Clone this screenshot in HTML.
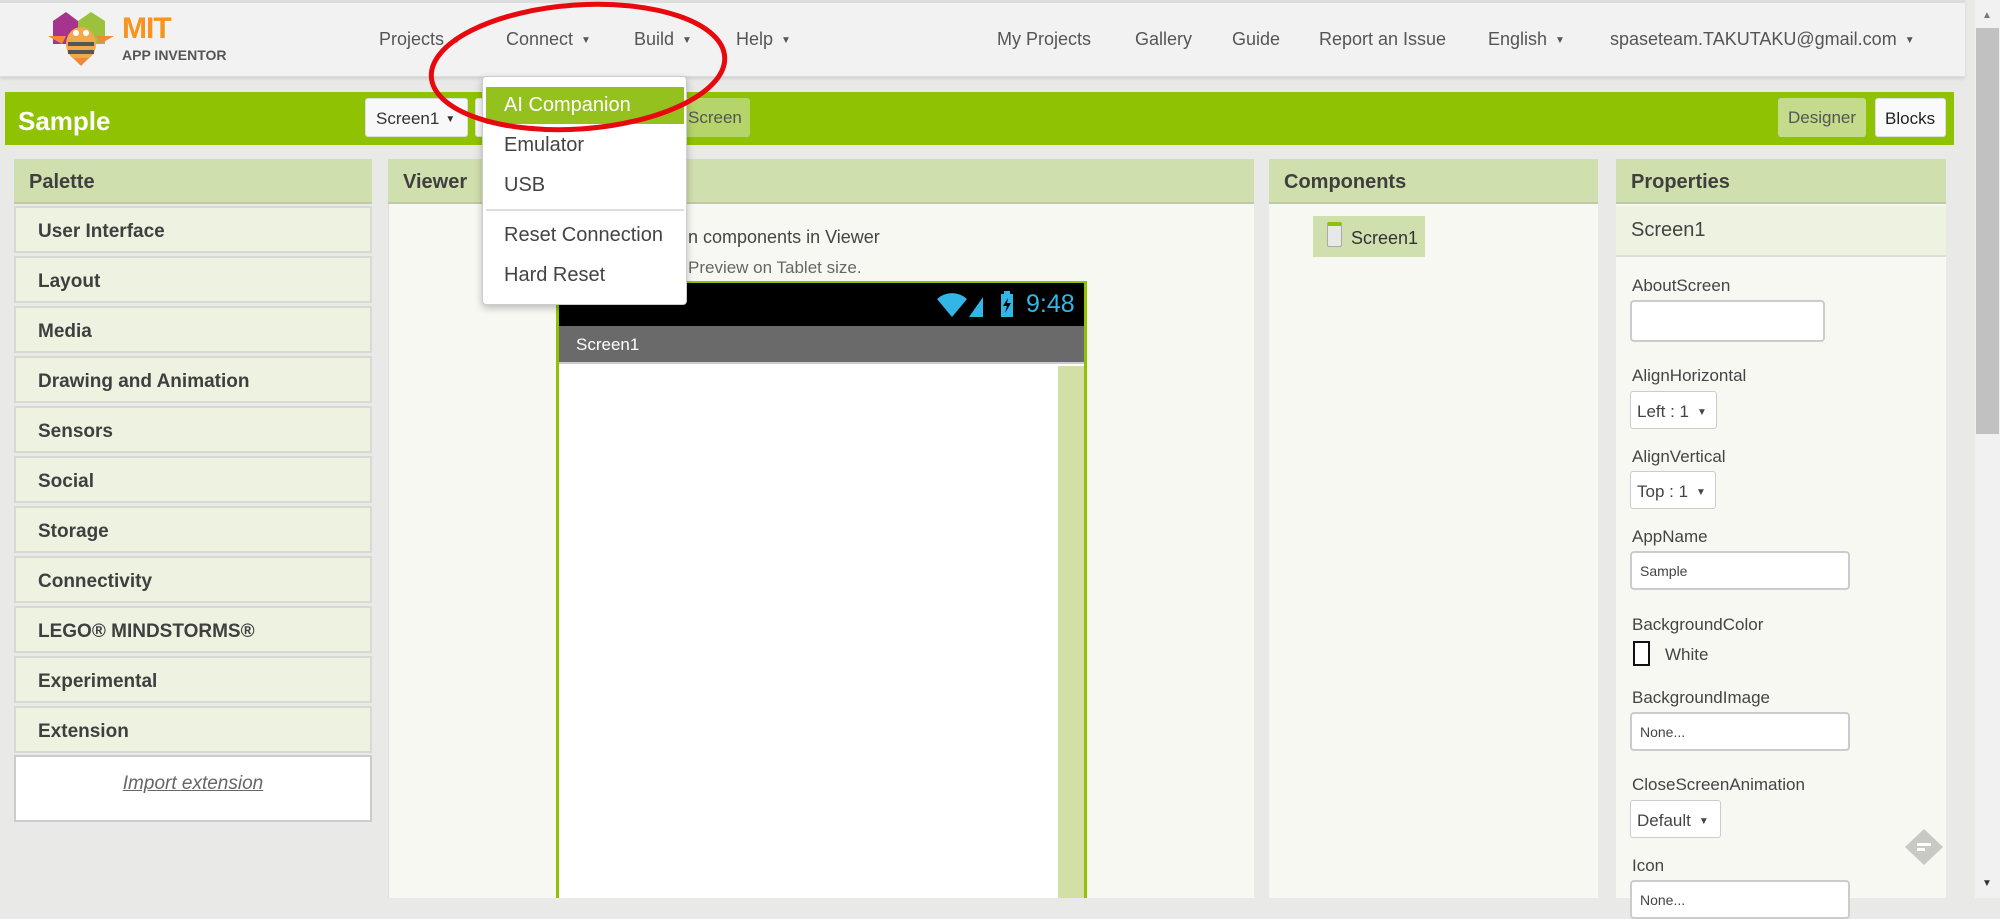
<!DOCTYPE html>
<html><head><meta charset="utf-8"><style>
*{margin:0;padding:0;box-sizing:border-box}
body{width:2000px;height:898px;overflow:hidden;background:#e9e9e7;font-family:"Liberation Sans",sans-serif;position:relative;color:#444}
.a{position:absolute}
.nav{font-size:18px;color:#555;top:29px;white-space:nowrap}
.car{font-size:10px;margin-left:8px;vertical-align:2px}
.hdr{background:#d0dfae;border-bottom:2px solid #bfc9a8;height:45px;font-weight:bold;font-size:20px;color:#3f3f3f;padding:12px 0 0 15px}
.item{left:14px;width:358px;height:47px;background:#eef2e1;border:2px solid #d9d9d4;font-weight:bold;font-size:19px;color:#3f3f3f;padding:13px 0 0 22px}
.lbl{left:1632px;font-size:17px;color:#444}
.inp{left:1630px;background:#fff;border:2px solid #ccc;border-radius:4px;font-size:14px;color:#444;padding:10px 0 0 8px}
.sel{left:1630px;background:#fff;border:1px solid #ccc;border-radius:3px;font-size:17px;color:#444;padding:10px 0 0 6px;height:38px}
.mi{left:504px;font-size:20px;color:#444}
</style></head><body>
<div class="a" style="left:0;top:0;width:1965px;height:77px;background:#f2f2f2;border-top:3px solid #ddd;border-bottom:1px solid #ddd;box-shadow:0 2px 3px rgba(0,0,0,.1)"></div>
<svg class="a" style="left:48px;top:6px" width="80" height="60" viewBox="0 0 80 60">
<polygon points="5,15 18,6 30,15 30,38 5,38" fill="#a5348f"/>
<polygon points="30,15 43,6 57,15 57,38 30,38" fill="#9bc23c"/>
<ellipse cx="33" cy="38" rx="15" ry="17" fill="#f0a94b"/>
<rect x="20" y="36" width="26" height="4" fill="#555"/><rect x="20" y="44" width="26" height="4" fill="#555"/>
<polygon points="0,30 18,30 14,38" fill="#f08a38"/><polygon points="66,30 48,30 52,38" fill="#f08a38"/>
<polygon points="25,52 41,52 33,60" fill="#f08a38"/>
<circle cx="28" cy="27" r="3" fill="#fff"/><circle cx="38" cy="27" r="3" fill="#fff"/>
</svg>
<div class="a" style="left:122px;top:12px;font-size:30px;font-weight:bold;color:#f7931e;letter-spacing:-1px">MIT</div>
<div class="a" style="left:122px;top:47px;font-size:14px;font-weight:bold;color:#555">APP INVENTOR</div>
<div class="a nav" style="left:379px">Projects<span class="car">▼</span></div>
<div class="a nav" style="left:506px">Connect<span class="car">▼</span></div>
<div class="a nav" style="left:634px">Build<span class="car">▼</span></div>
<div class="a nav" style="left:736px">Help<span class="car">▼</span></div>
<div class="a nav" style="left:997px">My Projects</div>
<div class="a nav" style="left:1135px">Gallery</div>
<div class="a nav" style="left:1232px">Guide</div>
<div class="a nav" style="left:1319px">Report an Issue</div>
<div class="a nav" style="left:1488px">English<span class="car">▼</span></div>
<div class="a nav" style="left:1610px">spaseteam.TAKUTAKU@gmail.com<span class="car">▼</span></div>
<div class="a" style="left:1975px;top:0;width:25px;height:898px;background:#f1f1f1"></div>
<div class="a" style="left:1976px;top:28px;width:23px;height:406px;background:#c1c1c1"></div>
<div class="a" style="left:1982px;top:10px;font-size:10px;color:#777">▲</div>
<div class="a" style="left:1982px;top:878px;font-size:10px;color:#333">▼</div>
<div class="a" style="left:5px;top:92px;width:1949px;height:53px;background:#8fc202"></div>
<div class="a" style="left:18px;top:106px;font-size:26px;font-weight:bold;color:#fff">Sample</div>
<div class="a" style="left:365px;top:98px;width:103px;height:39px;background:#f8f8f8;border:1px solid #ddd;border-radius:3px;font-size:17px;color:#333;padding:10px 0 0 10px">Screen1<span class="car" style="margin-left:6px">▼</span></div>
<div class="a" style="left:475px;top:98px;width:130px;height:39px;background:#f8f8f8;border:1px solid #ddd;border-radius:3px"></div>
<div class="a" style="left:612px;top:98px;width:138px;height:39px;background:#b5d46a;border-radius:3px;font-size:17px;color:#555;padding:10px 0 0 76px">Screen</div>
<div class="a" style="left:1778px;top:98px;width:88px;height:39px;background:#c3db8a;border-radius:3px;font-size:17px;color:#555;padding:10px 0 0 10px">Designer</div>
<div class="a" style="left:1875px;top:98px;width:71px;height:39px;background:#fafafa;border:1px solid #ddd;border-radius:3px;font-size:17px;color:#222;padding:10px 0 0 9px">Blocks</div>
<div class="a hdr" style="left:14px;top:159px;width:358px">Palette</div>
<div class="a item" style="top:206px">User Interface</div>
<div class="a item" style="top:256px">Layout</div>
<div class="a item" style="top:306px">Media</div>
<div class="a item" style="top:356px">Drawing and Animation</div>
<div class="a item" style="top:406px">Sensors</div>
<div class="a item" style="top:456px">Social</div>
<div class="a item" style="top:506px">Storage</div>
<div class="a item" style="top:556px">Connectivity</div>
<div class="a item" style="top:606px">LEGO® MINDSTORMS®</div>
<div class="a item" style="top:656px">Experimental</div>
<div class="a item" style="top:706px">Extension</div>
<div class="a" style="left:14px;top:755px;width:358px;height:67px;background:#fff;border:2px solid #ccc;text-align:center;padding-top:16px;font-size:19px;font-style:italic;text-decoration:underline;color:#666">Import extension</div>
<div class="a" style="left:388px;top:159px;width:866px;height:739px;background:#f8f8f3;border-left:1px solid #ddd"></div>
<div class="a hdr" style="left:388px;top:159px;width:866px">Viewer</div>
<div class="a" style="left:688px;top:227px;font-size:18px;color:#444">n components in Viewer</div>
<div class="a" style="left:688px;top:258px;font-size:17px;color:#666">Preview on Tablet size.</div>
<div class="a" style="left:556px;top:281px;width:531px;height:617px;border:3px solid #8fc202;border-bottom:none;background:#fff"></div>
<div class="a" style="left:559px;top:283px;width:525px;height:43px;background:#000"></div>
<svg class="a" style="left:935px;top:289px" width="90" height="30" viewBox="0 0 90 30">
<path d="M2,10 A22,22 0 0 1 32,10 L17,28 Z" fill="#33b5e5"/>
<polygon points="34,28 48,8 48,28" fill="#33b5e5"/>
<rect x="66" y="5" width="12" height="23" fill="#33b5e5"/><rect x="69" y="2" width="6" height="3" fill="#33b5e5"/>
<polygon points="73,9 68,17 72,17 70,24 76,14 72,14" fill="#000"/>
</svg>
<div class="a" style="left:1026px;top:290px;font-size:25px;color:#33b5e5">9:48</div>
<div class="a" style="left:559px;top:326px;width:525px;height:38px;background:#6a6a6a;border-bottom:2px solid #ccc;color:#fff;font-size:17px;padding:9px 0 0 17px">Screen1</div>
<div class="a" style="left:1058px;top:366px;width:26px;height:532px;background:#d2e0a5"></div>
<div class="a" style="left:1269px;top:159px;width:329px;height:739px;background:#f8f8f3"></div>
<div class="a hdr" style="left:1269px;top:159px;width:329px">Components</div>
<div class="a" style="left:1313px;top:216px;width:112px;height:41px;background:#d0dfae"></div>
<div class="a" style="left:1327px;top:222px;width:15px;height:25px;background:#e8e8e8;border:1px solid #aaa;border-top:4px solid #8fc202;border-radius:2px"></div>
<div class="a" style="left:1351px;top:228px;font-size:18px;color:#333">Screen1</div>
<div class="a" style="left:1616px;top:159px;width:330px;height:739px;background:#f8f8f3"></div>
<div class="a hdr" style="left:1616px;top:159px;width:330px">Properties</div>
<div class="a" style="left:1616px;top:206px;width:330px;height:51px;background:#eef2e1;border-bottom:2px solid #ddd;font-size:20px;color:#444;padding:13px 0 0 15px">Screen1</div>
<div class="a lbl" style="top:276px">AboutScreen</div>
<div class="a inp" style="top:300px;width:195px;height:42px"></div>
<div class="a lbl" style="top:366px">AlignHorizontal</div>
<div class="a sel" style="top:391px;width:87px">Left : 1<span class="car" style="margin-left:8px">▼</span></div>
<div class="a lbl" style="top:447px">AlignVertical</div>
<div class="a sel" style="top:471px;width:86px">Top : 1<span class="car" style="margin-left:8px">▼</span></div>
<div class="a lbl" style="top:527px">AppName</div>
<div class="a inp" style="top:551px;width:220px;height:39px">Sample</div>
<div class="a lbl" style="top:615px">BackgroundColor</div>
<div class="a" style="left:1633px;top:641px;width:17px;height:25px;border:2px solid #111;background:#fff"></div>
<div class="a" style="left:1665px;top:645px;font-size:17px;color:#444">White</div>
<div class="a lbl" style="top:688px">BackgroundImage</div>
<div class="a inp" style="top:712px;width:220px;height:39px">None...</div>
<div class="a lbl" style="top:775px">CloseScreenAnimation</div>
<div class="a sel" style="top:800px;width:91px">Default<span class="car" style="margin-left:8px">▼</span></div>
<div class="a lbl" style="top:856px">Icon</div>
<div class="a inp" style="top:880px;width:220px;height:39px">None...</div>
<svg class="a" style="left:1905px;top:829px" width="38" height="36" viewBox="0 0 38 36"><polygon points="19,0 38,18 19,36 0,18" fill="#c8c8c4"/><rect x="12" y="14" width="14" height="3" fill="#fff"/><rect x="12" y="19" width="8" height="3" fill="#fff"/></svg>
<div class="a" style="left:482px;top:76px;width:205px;height:229px;background:#fff;border:1px solid #ccc;border-radius:4px;box-shadow:0 3px 8px rgba(0,0,0,.25)"></div>
<div class="a" style="left:486px;top:87px;width:198px;height:37px;background:#95c11f"></div>
<div class="a mi" style="top:94px;color:#fff">AI Companion</div>
<div class="a mi" style="top:134px">Emulator</div>
<div class="a mi" style="top:174px">USB</div>
<div class="a" style="left:486px;top:209px;width:198px;height:2px;background:#ddd"></div>
<div class="a mi" style="top:224px">Reset Connection</div>
<div class="a mi" style="top:264px">Hard Reset</div>
<svg class="a" style="left:0;top:0" width="800" height="160"><ellipse cx="578" cy="67" rx="147" ry="62" transform="rotate(-4 578 67)" fill="none" stroke="#e8090f" stroke-width="5"/></svg>
</body></html>
